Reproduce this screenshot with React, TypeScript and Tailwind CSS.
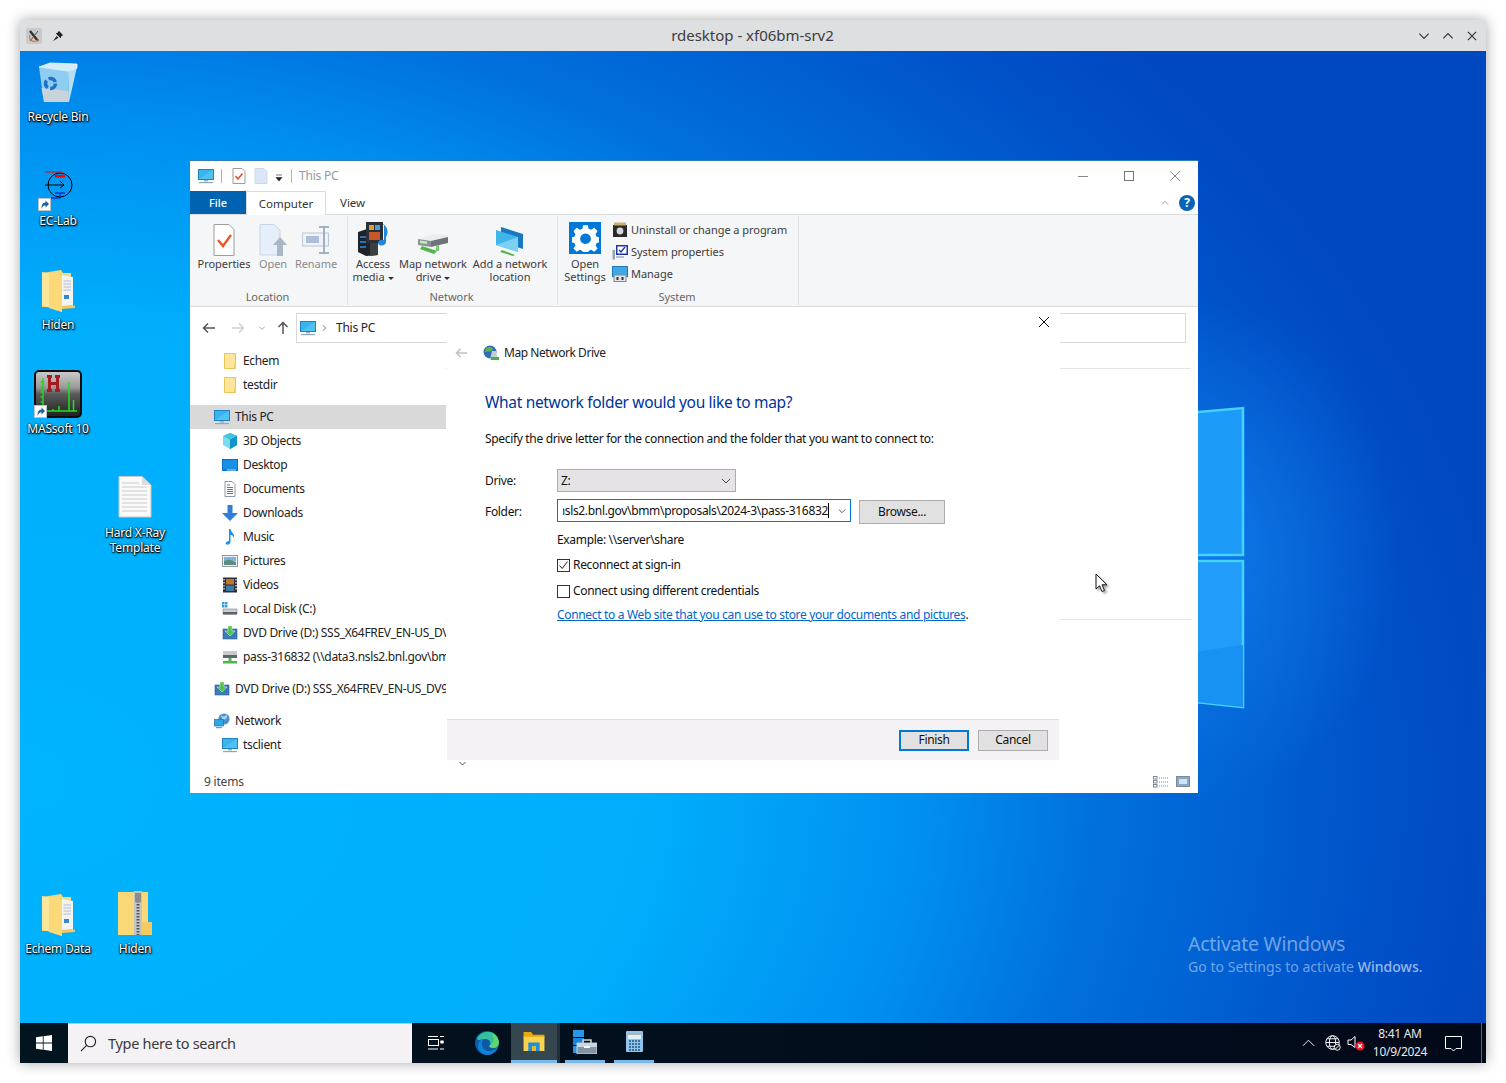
import React from "react";

type P = { className?: string };

const Pc = ({ className = "w-4 h-4" }: P) => (
  <svg viewBox="0 0 16 16" className={className}>
    <rect x="0.5" y="1.5" width="15" height="10" fill="#39b4ee" stroke="#1d83c4" />
    <path d="M1 11 L15 2 V11Z" fill="#61c9f4" opacity="0.6" />
    <rect x="6" y="12" width="4" height="1.5" fill="#9fb2c2" />
    <rect x="1" y="14" width="14" height="1.2" fill="#8fa8bd" />
  </svg>
);
const SmallFolder = () => (
  <svg viewBox="0 0 16 16" className="w-4 h-4">
    <path d="M2.5 0.5 H13.5 V15.5 H2.5Z" fill="#fde69a" stroke="#e9c455" />
    <rect x="12" y="10" width="2" height="5.5" fill="#f5cf63" />
  </svg>
);
const Cube = () => (
  <svg viewBox="0 0 16 16" className="w-4 h-4">
    <path d="M8 0 L15 3 V12 L8 16Z" fill="#1289bd" />
    <path d="M8 0 L1 3 V12 L8 16Z" fill="#7bdcee" />
    <path d="M8 0 L15 3 L8 7 L1 3Z" fill="#43c5e2" />
    <path d="M8 7 V16 L15 12 V3Z" fill="#0f95c8" />
  </svg>
);
const DesktopI = () => (
  <svg viewBox="0 0 16 16" className="w-4 h-4">
    <rect x="0" y="2" width="16" height="12" fill="#0a6fc8" />
    <rect x="1" y="3" width="14" height="9.5" fill="#1a8fe6" />
    <rect x="5" y="12.5" width="9" height="1" fill="#bfe0f6" />
  </svg>
);
const Docs = () => (
  <svg viewBox="0 0 16 16" className="w-4 h-4">
    <path d="M3 0.5 H10 L13 3.5 V15.5 H3Z" fill="#fff" stroke="#8a9aa8" />
    <path d="M5 4 H8 M5 6.5 H11 M5 8.5 H11 M5 10.5 H11 M5 12.5 H11" stroke="#2e86c8" />
  </svg>
);
const Down = () => (
  <svg viewBox="0 0 16 16" className="w-4 h-4">
    <path d="M5.5 0 H10.5 V8 H16 L8 16 L0 8 H5.5Z" fill="#2f7fd6" />
  </svg>
);
const Music = () => (
  <svg viewBox="0 0 16 16" className="w-4 h-4">
    <path d="M7 0 H8.5 C9 4 13 4 12 9 C11 6.5 9.5 6 8.5 6 V13 C8.5 15 6 16 4.5 15.5 C3 15 3.5 12.5 7 12Z" fill="#1e90e8" />
  </svg>
);
const Pics = () => (
  <svg viewBox="0 0 16 16" className="w-4 h-4">
    <rect x="0.5" y="2.5" width="15" height="11" fill="#eef3f6" stroke="#8d9aa4" />
    <rect x="2" y="4" width="12" height="4" fill="#7cb5dc" />
    <path d="M2 8 L7 6.5 L14 9 V12 H2Z" fill="#5f8c7e" />
  </svg>
);
const Vids = () => (
  <svg viewBox="0 0 16 16" className="w-4 h-4">
    <rect x="1" y="0.5" width="14" height="15" fill="#2b2f38" />
    <rect x="4" y="2" width="8" height="5.5" fill="#c0752a" />
    <rect x="4" y="8.5" width="8" height="5.5" fill="#3a79a8" />
    <path d="M2 2 V14 M14 2 V14" stroke="#cfd5da" strokeDasharray="1.5 1.5" strokeWidth="1.4" />
  </svg>
);
const Disk = () => (
  <svg viewBox="0 0 16 16" className="w-4 h-4">
    <rect x="0" y="1" width="2.5" height="2.5" fill="#29a3e8" />
    <rect x="3" y="1" width="2.5" height="2.5" fill="#29a3e8" />
    <rect x="0" y="4" width="2.5" height="2.5" fill="#29a3e8" />
    <rect x="3" y="4" width="2.5" height="2.5" fill="#29a3e8" />
    <path d="M1 8 H15 V13 H1Z" fill="#c9ced2" stroke="#7c858c" strokeWidth="0.6" />
    <rect x="1" y="11" width="14" height="2.5" fill="#59636b" />
  </svg>
);
const Dvd = () => (
  <svg viewBox="0 0 16 16" className="w-4 h-4">
    <rect x="1" y="4" width="14" height="10" fill="#3c7ab8" stroke="#2a5e94" strokeWidth="0.6" />
    <path d="M6 1 H10 V6 H13 L8 11 L3 6 H6Z" fill="#4fc34a" stroke="#e8f7e4" strokeWidth="0.5" />
  </svg>
);
const NetDrive = ({ className = "w-4 h-4" }: P) => (
  <svg viewBox="0 0 16 16" className={className}>
    <path d="M1 2 H15 V8 H1Z" fill="#c7cbce" />
    <rect x="1" y="6" width="14" height="3" fill="#5c666d" />
    <rect x="6.5" y="9" width="3" height="3" fill="#4db848" />
    <rect x="1" y="12" width="14" height="2.5" fill="#4db848" />
  </svg>
);
const NetGlobe = () => (
  <svg viewBox="0 0 16 16" className="w-4 h-4">
    <circle cx="10" cy="6" r="5.6" fill="#4a8fc9" />
    <path d="M7 2 C9 4 11 3 13 2 C14 5 11 8 8 6Z" fill="#9fd3ef" />
    <rect x="0.5" y="6.5" width="9" height="6.5" fill="#2ea6e6" stroke="#1577b8" strokeWidth="0.7" />
    <rect x="2" y="14" width="6" height="1.2" fill="#7f96aa" />
  </svg>
);
const Shortcut = ({ className }: P) => (
  <svg viewBox="0 0 13 13" className={className}>
    <rect x="0.5" y="0.5" width="12" height="12" fill="#fff" stroke="#bcc4cb" />
    <path d="M3.5 11 C3.5 6 5 4.8 7.5 4.5 V2.5 L11 6 L7.5 9.5 V7.3 C5.5 7.3 4.5 8.5 3.5 11Z" fill="#1d5fa8" />
  </svg>
);
const BigFolder = ({ className = "" }: P) => (
  <svg viewBox="0 0 34 44" className={className}>
    <path d="M1 4 L20 1 L22 4 H30 V38 H1Z" fill="#f5d77c" />
    <path d="M21 6 L32 8 V39 L21 37Z" fill="#f1f3f4" />
    <path d="M22.5 12 H30 M22.5 15 H30 M22.5 18 H30 M22.5 21 H30" stroke="#b4bdc5" />
    <path d="M23 26 H28 V30 H23Z" fill="#3b86c7" />
    <path d="M1 3 L21 7 V43 L1 36Z" fill="#fde59b" />
    <path d="M8 5 L21 7 V43 L8 39Z" fill="#fbd878" />
    <path d="M30 36 L34 37 V39 L21 40 V37Z" fill="#f3c95b" />
  </svg>
);

const Row = ({ icon, children, top, sel, gap }: { icon: React.ReactNode; children: React.ReactNode; top?: boolean; sel?: boolean; gap?: boolean }) => (
  <div
    className={`h-6 flex items-center gap-[5px] whitespace-nowrap overflow-hidden ${top ? "pl-6" : "pl-8"} ${sel ? "bg-[#d9d9d9]" : ""} ${gap ? "mt-2" : ""}`}
  >
    <span className="w-4 h-4 shrink-0">{icon}</span>
    <span>{children}</span>
  </div>
);

const RibbonBtn = ({ w, icon, children, dim }: { w: string; icon: React.ReactNode; children: React.ReactNode; dim?: boolean }) => (
  <div className={`${w} flex flex-col items-center shrink-0`}>
    <div className="h-[34px] flex items-end justify-center">{icon}</div>
    <div className={`mt-px text-center leading-[13px] whitespace-nowrap ${dim ? "text-[#8a8a8a]" : "text-[#3c3c3c]"}`}>{children}</div>
  </div>
);
const Caret = () => <span className="inline-block align-middle ml-[3px] w-0 h-0 border-x-[3px] border-x-transparent border-t-[3px] border-t-[#333]" />;

const GroupLabel = ({ children }: { children: React.ReactNode }) => (
  <div className="h-[13px] mb-[2px] pr-[2px] leading-[13px] text-center text-[#666]">{children}</div>
);

const DeskLabel = ({ children }: { children: React.ReactNode }) => (
  <div className="text-white text-center text-[12px] leading-[15px] tracking-[-0.2px] [text-shadow:0_1px_1px_#000,1px_1px_2px_#000,0_0_2px_#000]">{children}</div>
);

const Chev = ({ className = "w-3 h-3", color = "#555" }: P & { color?: string }) => (
  <svg viewBox="0 0 12 12" className={className} fill="none" stroke={color}>
    <path d="M2 4 L6 8 L10 4" />
  </svg>
);

export default function App() {
  return (
    <div className="w-[1506px] h-[1083px] bg-white pt-5 px-5 font-['Noto_Sans',sans-serif] text-[12px] overflow-hidden">
      <div className="w-[1466px] h-[1043px] flex flex-col shadow-[0_0_14px_rgba(0,0,0,0.35)] rounded-t-[2px]">
        {/* Title bar */}
        <div className="h-[31px] shrink-0 bg-[#dedfe1] flex items-center pl-[6px] pr-[7px]">
          <div className="w-[70px] flex items-center">
            <div className="w-4 h-4 bg-[#c8cbcd] rounded-[2px] flex items-center justify-center">
              <svg viewBox="0 0 14 14" className="w-[14px] h-[14px]" fill="none">
                <path d="M3 2 L11 12" stroke="#333" strokeWidth="2.4" />
                <path d="M11 2 L3 12" stroke="#555" strokeWidth="1" />
                <path d="M3 6 C1 11 6 14 11 11" stroke="#e07b30" strokeWidth="1.2" />
              </svg>
            </div>
            <svg viewBox="0 0 14 14" className="w-3 h-3 ml-[10px]">
              <path d="M8 1 L13 6 L11 7 L10 9.5 L4.5 4 L7 3Z M5.5 7 L1 13 L7.5 9Z" fill="#222" />
            </svg>
          </div>
          <div className="flex-1 text-center text-[15px] text-[#3c3c3c] tracking-[-0.02px]">rdesktop - xf06bm-srv2</div>
          <div className="w-[70px] flex items-center justify-end gap-[10px]">
            <Chev className="w-[14px] h-[14px]" color="#333" />
            <svg viewBox="0 0 12 12" className="w-[14px] h-[14px]" fill="none" stroke="#333"><path d="M2 8 L6 4 L10 8" /></svg>
            <svg viewBox="0 0 12 12" className="w-[14px] h-[14px]" fill="none" stroke="#333"><path d="M2.5 2.5 L9.5 9.5 M9.5 2.5 L2.5 9.5" /></svg>
          </div>
        </div>

        {/* Desktop */}
        <div className="relative flex-1 overflow-hidden bg-[radial-gradient(ellipse_1500px_1100px_at_0%_75%,#00b4ff_0%,#00aefc_42%,#0090f0_60%,#0070dc_72%,#0050c8_92%,#0048c0_100%)]">
          {/* wallpaper logo */}
          <div className="absolute left-[980px] top-[250px] w-[400px] h-[500px] bg-[radial-gradient(closest-side,rgba(20,130,240,0.75),rgba(20,110,230,0))]" />
          <svg viewBox="0 0 120 320" className="absolute left-[1110px] top-[352px] w-[120px] h-[320px]">
            <path d="M0 15 L113 5 V152 H0Z" fill="#1c9bf8" stroke="#46d2ff" strokeWidth="2.5" />
            <path d="M0 158 H113 V304 L0 292Z" fill="#219cf9" stroke="#46d2ff" strokeWidth="2.5" />
            <path d="M0 258 L113 242 V304 L0 292Z" fill="#1791f2" />
          </svg>

          {/* Desktop icons */}
          <div className="absolute left-[-2px] top-[9px] w-[80px] flex flex-col items-center">
            <svg viewBox="0 0 40 44" className="w-10 h-11">
              <path d="M1 7 L12 3 L39 4 L39 8 L30 11Z" fill="#d5ecf8" />
              <path d="M1 7 L30 11 L31 42 L6 42Z" fill="#8fcdf0" />
              <path d="M30 11 L39 7 L31 42Z" fill="#b4dff5" />
              <path d="M3.5 28 L30.5 31 L31 42 L6 42Z" fill="#c9d3da" />
              <path d="M1 7 L12 3 L39 4 L39 8 L30 11Z" fill="none" stroke="#e9f6fc" strokeWidth="0.8" />
              <circle cx="12.5" cy="23.5" r="5" fill="none" stroke="#1f72c4" strokeWidth="3.6" strokeDasharray="8 2.5" />
            </svg>
            <div className="mt-[5px]"><DeskLabel>Recycle Bin</DeskLabel></div>
          </div>
          <div className="absolute left-[-2px] top-[118px] w-[80px] flex flex-col items-center">
            <div className="relative w-[44px] h-[42px]">
              <svg viewBox="0 0 44 42" className="w-[44px] h-[42px]" fill="none">
                <circle cx="24" cy="16" r="12" stroke="#000" strokeWidth="1" />
                <path d="M9 3 H26 V6" stroke="#f00" />
                <rect x="19" y="6" width="10" height="2.5" fill="#f00" />
                <path d="M9 16 H28 M24 12 L28 16 L24 19" stroke="#000" />
                <path d="M19 24 H29 M24 24 V29 H15" stroke="#00c" />
              </svg>
              <Shortcut className="absolute left-[2px] bottom-0 w-[13px] h-[13px]" />
            </div>
            <div className="mt-[2px]"><DeskLabel>EC-Lab</DeskLabel></div>
          </div>
          <div className="absolute left-[-2px] top-[218px] w-[80px] flex flex-col items-center">
            <BigFolder className="w-[34px] h-[44px]" />
            <div className="mt-[4px]"><DeskLabel>Hiden</DeskLabel></div>
          </div>
          <div className="absolute left-[-2px] top-[319px] w-[80px] flex flex-col items-center">
            <div className="relative w-[48px] h-[48px]">
              <svg viewBox="0 0 48 48" className="w-12 h-12">
                <defs>
                  <linearGradient id="mas" x1="0" y1="0" x2="0" y2="1">
                    <stop offset="0" stopColor="#c9c9c9" />
                    <stop offset="0.35" stopColor="#9a9a9a" />
                    <stop offset="0.5" stopColor="#5a5a5a" />
                    <stop offset="1" stopColor="#222" />
                  </linearGradient>
                </defs>
                <rect x="0" y="0" width="48" height="48" rx="5" fill="#0d0d0d" />
                <rect x="2" y="2" width="44" height="44" rx="3" fill="url(#mas)" />
                <path d="M13 5 H18 V8 H17 V12 H22 V8 H21 V5 H26 V8 H25 V19 H26 V22 H21 V19 H22 V15 H17 V19 H18 V22 H13 V19 H14 V8 H13Z" fill="#a51b20" />
                <path d="M9 41 H43 M35 41 V12 M39.5 41 V30 M25 41 V36 M19 41 V39" stroke="#22e022" strokeWidth="1.5" />
                <path d="M9 42 V8 M6.5 12 H9 M6.5 17 H9 M6.5 22 H9 M6.5 27 H9 M6.5 32 H9" stroke="#28d028" strokeWidth="1.5" />
              </svg>
              <Shortcut className="absolute left-0 bottom-0 w-[13px] h-[13px]" />
            </div>
            <div className="mt-[3px]"><DeskLabel>MASsoft 10</DeskLabel></div>
          </div>
          <div className="absolute left-[75px] top-[425px] w-[80px] flex flex-col items-center">
            <svg viewBox="0 0 34 42" className="w-[34px] h-[42px]">
              <path d="M1 0.5 H24 L33 9 V41 H1Z" fill="#fafafa" stroke="#c6c6c6" />
              <path d="M24 0.5 V9 H33Z" fill="#dcdcdc" />
              <path d="M4 7 H21 M4 11 H29 M4 15 H29 M4 19 H29 M4 23 H29 M4 27 H29 M4 31 H29 M4 35 H29" stroke="#c9c9c9" />
            </svg>
            <div className="mt-[7px]"><DeskLabel>Hard X-Ray<br />Template</DeskLabel></div>
          </div>
          <div className="absolute left-[-2px] top-[842px] w-[80px] flex flex-col items-center">
            <BigFolder className="w-[34px] h-[44px]" />
            <div className="mt-[4px]"><DeskLabel>Echem Data</DeskLabel></div>
          </div>
          <div className="absolute left-[75px] top-[840px] w-[80px] flex flex-col items-center">
            <svg viewBox="0 0 34 44" className="w-[34px] h-[44px]">
              <path d="M0 1 H30 V31 L34 39 V44 H0Z" fill="#f9d878" />
              <path d="M22 31 H34 V44 H22Z" fill="#f4c95e" />
              <rect x="16" y="0" width="8" height="44" fill="#c5c5c5" />
              <path d="M20 10 V44" stroke="#555" strokeWidth="3" strokeDasharray="1.5 1.5" />
              <rect x="17" y="2" width="6" height="9" fill="#8c8c8c" />
            </svg>
            <div className="mt-[6px]"><DeskLabel>Hiden</DeskLabel></div>
          </div>

          {/* Activate watermark */}
          <div className="absolute left-[1168px] top-[880px] text-white/45">
            <div className="text-[19.5px] leading-[26px] tracking-[-0.25px]">Activate Windows</div>
            <div className="text-[14px] leading-[20px] tracking-[0.05px]">Go to Settings to activate <span className="text-white/60 font-medium">Windows.</span></div>
          </div>

          {/* Cursor */}
          <svg viewBox="0 0 14 20" className="absolute left-[1075px] top-[522px] w-[14px] h-5 z-10 drop-shadow-[2px_2px_1px_rgba(0,0,0,0.35)]">
            <path d="M1 1 V16 L4.5 12.8 L7 18.5 L9.5 17.4 L7 11.8 H12Z" fill="#fff" stroke="#111" strokeWidth="1" />
          </svg>

          {/* Explorer */}
          <div className="absolute left-[170px] top-[109px] w-[1008px] h-[633px] bg-white border-t border-[#2a7fb4] flex flex-col text-[#222]">
            <div className="h-[30px] shrink-0 flex items-center pl-2 text-[#999]">
              <Pc />
              <div className="w-px h-[14px] bg-[#b5b5b5] ml-[7px]" />
              <svg viewBox="0 0 14 16" className="w-[14px] h-4 ml-[10px]">
                <path d="M1 0.5 H10 L13 3.5 V15.5 H1Z" fill="#fff" stroke="#9a9a9a" />
                <path d="M3.5 8 L6 11 L10.5 5.5" fill="none" stroke="#e0542a" strokeWidth="1.6" />
              </svg>
              <svg viewBox="0 0 14 16" className="w-[14px] h-4 ml-2">
                <path d="M1 0.5 H10 L13 3.5 V15.5 H1Z" fill="#dbe6f6" stroke="#ccd9ec" />
              </svg>
              <svg viewBox="0 0 8 8" className="w-2 h-2 ml-[7px] mt-[3px]"><path d="M1 1 H7 M1 3.5 H7 L4 7Z" fill="#222" stroke="#222" strokeWidth="0.6" /></svg>
              <div className="w-px h-[14px] bg-[#b5b5b5] ml-2" />
              <div className="ml-[7px] tracking-[-0.2px]">This PC</div>
              <div className="flex-1" />
              <div className="w-[46px] flex justify-center"><svg viewBox="0 0 12 12" className="w-3 h-3" stroke="#888"><path d="M1 6.5 H11" /></svg></div>
              <div className="w-[46px] flex justify-center"><svg viewBox="0 0 12 12" className="w-3 h-3" fill="none" stroke="#777"><rect x="1.5" y="1.5" width="9" height="9" /></svg></div>
              <div className="w-[46px] flex justify-center"><svg viewBox="0 0 12 12" className="w-3 h-3" stroke="#888"><path d="M1 1 L11 11 M11 1 L1 11" /></svg></div>
            </div>
            <div className="h-6 shrink-0 flex items-stretch border-b border-[#dadbdc]">
              <div className="w-[56px] bg-[#0063b1] text-white flex items-center justify-center font-medium text-[11px] pt-px">File</div>
              <div className="w-[80px] h-6 bg-white border-x border-t border-[#dadbdc] flex items-center justify-center text-[#333] text-[11.5px]">Computer</div>
              <div className="ml-[14px] flex items-center text-[#333] text-[11.5px]">View</div>
              <div className="flex-1" />
              <svg viewBox="0 0 12 12" className="w-[10px] h-[10px] self-center mr-[9px]" fill="none" stroke="#999"><path d="M2 8 L6 4 L10 8" /></svg>
              <div className="w-4 h-4 self-center mr-[3px] rounded-full bg-[#0a64b5] text-white text-[12px] font-bold flex items-center justify-center leading-none">?</div>
            </div>
            {/* Ribbon */}
            <div className="h-[92px] shrink-0 bg-[#f5f6f7] border-b border-[#dadbdc] flex text-[11px] tracking-[-0.05px]">
              <div className="w-[158px] flex flex-col border-r border-[#e2e3e4] my-[1px]">
                <div className="flex flex-1 pl-2 pt-[6px]">
                  <RibbonBtn w="w-[52px]" icon={
                    <svg viewBox="0 0 22 32" className="w-[22px] h-8">
                      <path d="M1 0.5 H16 L21 5.5 V31.5 H1Z" fill="#fff" stroke="#9c9c9c" />
                      <path d="M5 16 L10 22 L18 11" fill="none" stroke="#e8562a" strokeWidth="2.4" />
                    </svg>}>Properties</RibbonBtn>
                  <div className="w-[5px] shrink-0" />
                  <RibbonBtn w="w-[36px]" dim icon={
                    <svg viewBox="0 0 28 32" className="w-7 h-8">
                      <path d="M1 0.5 H15 L21 6 V31 H1Z" fill="#e6eefa" stroke="#c7d5ea" />
                      <path d="M21 13 L28 21 H24 V32 H18 V21 H14Z" fill="#a9b7c6" />
                    </svg>}>Open</RibbonBtn>
                  <RibbonBtn w="w-[50px]" dim icon={
                    <svg viewBox="0 0 28 28" className="w-7 h-7 mb-[2px]">
                      <rect x="0.5" y="7" width="26" height="13" fill="#eef3f9" stroke="#b9c7d6" />
                      <rect x="4" y="10" width="13" height="7" fill="#a9c0d8" />
                      <path d="M17 1 H27 M22 1 V27 M17 27 H27" stroke="#9fb0c0" strokeWidth="2" />
                    </svg>}>Rename</RibbonBtn>
                </div>
                <GroupLabel>Location</GroupLabel>
              </div>
              <div className="w-[210px] flex flex-col border-r border-[#e2e3e4] my-[1px]">
                <div className="flex flex-1 pt-[6px]">
                  <RibbonBtn w="w-[50px]" icon={
                    <svg viewBox="0 0 34 34" className="w-[34px] h-[34px]">
                      <path d="M2 10 L14 6 L22 10 V33 L10 34 L2 30Z" fill="#1f2328" />
                      <path d="M14 6 L22 10 V33 L14 34Z" fill="#3a3f46" />
                      <path d="M4 15 H10 M4 20 H10 M4 25 H10" stroke="#2f8fe0" strokeWidth="1.5" />
                      <rect x="10" y="0" width="17" height="21" fill="#2a3038" />
                      <rect x="13" y="3" width="5" height="5" fill="#d9a02a" />
                      <rect x="19" y="3" width="5" height="5" fill="#4f9fd0" />
                      <rect x="13" y="10" width="11" height="8" fill="#c9572c" />
                      <path d="M27 2 C33 6 32 12 30 15 V20 C30 24 23 25 22 21 C22 18 26 17 28 18 V2Z" fill="#1e88dc" />
                    </svg>}>Access<br />media<Caret /></RibbonBtn>
                  <RibbonBtn w="w-[70px]" icon={
                    <svg viewBox="0 0 32 22" className="w-8 h-[22px] mb-[2px]">
                      <path d="M1 7 L16 2 L31 3 L31 8 L14 12 L1 10Z" fill="#eceeee" />
                      <path d="M1 7 L14 9 V15 L1 13Z" fill="#8c9398" />
                      <path d="M3 8.5 L10 9.5 V12 L3 11Z" fill="#c5e8b8" />
                      <path d="M14 9 L31 5 V11 L14 15Z" fill="#6c747a" />
                      <path d="M5 14 L20 19 L17 22 L3 17Z" fill="#55b44a" />
                      <rect x="19" y="13" width="3" height="6" fill="#7cc96f" />
                    </svg>}>Map network<br />drive<Caret /></RibbonBtn>
                  <RibbonBtn w="w-[84px]" icon={
                    <svg viewBox="0 0 30 30" className="w-[30px] h-[30px]">
                      <path d="M6 1 L28 8 V23 L6 16Z" fill="#1a78c0" />
                      <path d="M1 4 L23 11 V26 L1 19Z" fill="#41b4ea" />
                      <path d="M1 19 L23 11 V26Z" fill="#7bd1f3" />
                      <path d="M7 24 L20 29 L18 30 L5 26Z" fill="#55b44a" />
                    </svg>}>Add a network<br />location</RibbonBtn>
                </div>
                <GroupLabel>Network</GroupLabel>
              </div>
              <div className="w-[241px] flex flex-col border-r border-[#e2e3e4] my-[1px]">
                <div className="flex flex-1 pt-[6px] pl-[5px]">
                  <RibbonBtn w="w-[44px]" icon={
                    <div className="w-8 h-8 mb-[2px] bg-[#0078d7] flex items-center justify-center">
                      <svg viewBox="0 0 24 24" className="w-[27px] h-[27px]">
                        <path fill="#fff" fillRule="evenodd" d="M10 1 h4 l.6 3 2.2.9 2.6-1.7 2.8 2.8-1.7 2.6.9 2.2 3 .6v4l-3 .6-.9 2.2 1.7 2.6-2.8 2.8-2.6-1.7-2.2.9-.6 3h-4l-.6-3-2.2-.9-2.6 1.7-2.8-2.8 1.7-2.6-.9-2.2-3-.6v-4l3-.6.9-2.2-1.7-2.6 2.8-2.8 2.6 1.7 2.2-.9z M12 8 a4.5 4.5 0 1 0 .01 0z" transform="translate(-0.6 -0.9) scale(1.05)" />
                      </svg>
                    </div>}>Open<br />Settings</RibbonBtn>
                  <div className="ml-[5px] -mt-[3px] flex flex-col text-[#3c3c3c]">
                    <div className="h-[22px] flex items-center gap-[3px]">
                      <svg viewBox="0 0 16 16" className="w-4 h-4"><rect x="1" y="3" width="14" height="12" fill="#2a2a2a" /><circle cx="8" cy="9" r="3.4" fill="#d7d7d7" /><rect x="2" y="0.5" width="12" height="3" fill="#c9b071" /></svg>
                      <span>Uninstall or change a program</span>
                    </div>
                    <div className="h-[22px] flex items-center gap-[3px]">
                      <svg viewBox="0 0 16 16" className="w-4 h-4"><rect x="4" y="1" width="12" height="10" fill="#2033a8" /><rect x="5.5" y="2.5" width="9" height="7" fill="#fff" /><path d="M7 6 L9 8 L13 3" fill="none" stroke="#2033a8" strokeWidth="1.4" /><rect x="0.5" y="6" width="2.5" height="9.5" fill="#9aa4ab" /><rect x="4" y="12" width="8" height="2" fill="#b8c0c6" /></svg>
                      <span>System properties</span>
                    </div>
                    <div className="h-[22px] flex items-center gap-[3px]">
                      <svg viewBox="0 0 16 16" className="w-4 h-4"><rect x="0.5" y="0.5" width="15" height="10" fill="#3fa9e6" stroke="#2078b8" /><rect x="2" y="9" width="12" height="6.5" fill="#dfe5ea" stroke="#7d8a94" /><rect x="4.5" y="11" width="2" height="3" fill="#333" /><rect x="9.5" y="11" width="2" height="3" fill="#333" /></svg>
                      <span>Manage</span>
                    </div>
                  </div>
                </div>
                <GroupLabel>System</GroupLabel>
              </div>
            </div>
            {/* Body */}
            <div className="relative flex-1 flex flex-col min-h-0">
              <div className="h-[42px] shrink-0 flex items-center pl-3 pr-3">
                <svg viewBox="0 0 14 12" className="w-[14px] h-3" fill="none" stroke="#555" strokeWidth="1.5"><path d="M13 6 H2 M6 1.5 L1.5 6 L6 10.5" /></svg>
                <svg viewBox="0 0 14 12" className="w-[14px] h-3 ml-[15px]" fill="none" stroke="#d0d0d0" strokeWidth="1.5"><path d="M1 6 H12 M8 1.5 L12.5 6 L8 10.5" /></svg>
                <Chev className="w-2 h-2 ml-[13px]" color="#777" />
                <svg viewBox="0 0 12 14" className="w-3 h-[14px] ml-[11px]" fill="none" stroke="#555" strokeWidth="1.5"><path d="M6 13 V2 M1.5 6 L6 1.5 L10.5 6" /></svg>
                <div className="ml-[7px] flex-1 h-[30px] border border-[#d9d9d9] flex items-center pl-[3px]">
                  <Pc />
                  <svg viewBox="0 0 6 8" className="w-[5px] h-2 ml-[6px]" fill="none" stroke="#666"><path d="M1 1 L4.5 4 L1 7" /></svg>
                  <span className="ml-[9px] text-[#222] tracking-[-0.25px]">This PC</span>
                </div>
              </div>
              <div className="flex-1 flex min-h-0">
                <div className="w-[256px] shrink-0 overflow-hidden tracking-[-0.33px]">
                  <Row icon={<SmallFolder />}>Echem</Row>
                  <Row icon={<SmallFolder />}>testdir</Row>
                  <Row top sel gap icon={<Pc />}>This PC</Row>
                  <Row icon={<Cube />}>3D Objects</Row>
                  <Row icon={<DesktopI />}>Desktop</Row>
                  <Row icon={<Docs />}>Documents</Row>
                  <Row icon={<Down />}>Downloads</Row>
                  <Row icon={<Music />}>Music</Row>
                  <Row icon={<Pics />}>Pictures</Row>
                  <Row icon={<Vids />}>Videos</Row>
                  <Row icon={<Disk />}>Local Disk (C:)</Row>
                  <Row icon={<Dvd />}>DVD Drive (D:) SSS_X64FREV_EN-US_DV9</Row>
                  <Row icon={<NetDrive />}>pass-316832 (\\data3.nsls2.bnl.gov\bmm\proposals)</Row>
                  <Row top gap icon={<Dvd />}>DVD Drive (D:) SSS_X64FREV_EN-US_DV9</Row>
                  <Row top gap icon={<NetGlobe />}>Network</Row>
                  <Row icon={<Pc />}>tsclient</Row>
                </div>
                <div className="flex-1 pr-[7px]">
                  <div className="h-5 border-b border-[#e5e5e5]" />
                  <div className="h-[251px] border-b border-[#e5e5e5]" />
                </div>
              </div>
              <div className="h-[22px] shrink-0 flex items-center pl-[14px] pr-2 text-[#444] tracking-[-0.2px]">
                <span>9 items</span>
                <div className="flex-1" />
                <svg viewBox="0 0 16 12" className="w-4 h-3 mr-[7px]" fill="none" stroke="#7f8a94"><rect x="0.5" y="0.5" width="3.5" height="2.5" /><rect x="0.5" y="4.5" width="3.5" height="2.5" /><rect x="0.5" y="8.5" width="3.5" height="2.5" /><path d="M6 2 H15 M6 6 H15 M6 10 H15" strokeDasharray="1 1" /></svg>
                <svg viewBox="0 0 14 12" className="w-[14px] h-3" fill="#86a9c6" stroke="#7f8a94"><rect x="0.5" y="0.5" width="13" height="10" /><rect x="3" y="3" width="8" height="5" fill="#cfe3f2" stroke="none" /></svg>
              </div>

              {/* Map Network Drive dialog */}
              <div className="absolute left-[257px] top-0 w-[613px] h-[453px] bg-white flex flex-col text-[#111] tracking-[-0.33px]">
                <div className="h-[30px] shrink-0 flex items-center justify-end pr-[10px]">
                  <svg viewBox="0 0 12 12" className="w-3 h-3" stroke="#111"><path d="M1 1 L11 11 M11 1 L1 11" /></svg>
                </div>
                <div className="h-[32px] shrink-0 flex items-center pl-2">
                  <svg viewBox="0 0 14 12" className="w-[13px] h-3" fill="none" stroke="#c0c0c0" strokeWidth="1.5"><path d="M13 6 H2 M6 1.5 L1.5 6 L6 10.5" /></svg>
                  <svg viewBox="0 0 16 16" className="w-4 h-4 ml-[15px]">
                    <circle cx="7" cy="7" r="6.5" fill="#2d6fb0" />
                    <path d="M3 3 C6 1 9 2 10 4 C8 8 5 6 2 7Z" fill="#5cb356" />
                    <path d="M9 6 L13 6 L15 15 L7 15Z" fill="#c5cdd2" />
                    <rect x="8" y="12" width="8" height="3" fill="#47b04a" />
                  </svg>
                  <span className="ml-[5px] text-[#222] tracking-[-0.45px]">Map Network Drive</span>
                </div>
                <div className="pl-[38px] pr-2 flex flex-col">
                  <div className="mt-[22px] h-6 flex items-center text-[15.5px] text-[#003399]">What network folder would you like to map?</div>
                  <div className="mt-[15px] h-[18px] flex items-center">Specify the drive letter for the connection and the folder that you want to connect to:</div>
                  <div className="mt-[21px] h-[23px] flex items-center">
                    <span className="w-[72px] mt-[1px]">Drive:</span>
                    <div className="w-[179px] h-[23px] bg-[#e6e3e6] border border-[#adadad] flex items-center justify-between pl-[3px] pr-[3px]">
                      <span>Z:</span>
                      <Chev className="w-3 h-3" color="#444" />
                    </div>
                  </div>
                  <div className="mt-[7px] h-[25px] flex items-start">
                    <span className="w-[72px] leading-[25px]">Folder:</span>
                    <div className="w-[294px] h-[23px] border border-[#0078d7] flex items-center pl-[5px] pr-[3px]">
                      <div className="w-[266px] flex justify-end overflow-hidden whitespace-nowrap border-r border-black h-[15px] items-center">
                        <span className="shrink-0">nsls2.bnl.gov\bmm\proposals\2024-3\pass-316832</span>
                      </div>
                      <Chev className="w-[10px] h-[10px] ml-[8px]" color="#444" />
                    </div>
                    <div className="ml-2 mt-[1px] w-[86px] h-6 bg-[#e1e1e1] border border-[#adadad] flex items-center justify-center">Browse...</div>
                  </div>
                  <div className="ml-[72px] mt-[7px] h-[18px] flex items-center">Example: \\server\share</div>
                  <div className="ml-[72px] mt-[7px] h-[18px] flex items-center gap-[3px]">
                    <div className="w-[13px] h-[13px] border border-[#333] bg-white flex items-center justify-center">
                      <svg viewBox="0 0 11 11" className="w-[11px] h-[11px]" fill="none" stroke="#222"><path d="M1.5 5.5 L4.2 8.5 L9.5 1.5" /></svg>
                    </div>
                    <span>Reconnect at sign-in</span>
                  </div>
                  <div className="ml-[72px] mt-[8px] h-[18px] flex items-center gap-[3px]">
                    <div className="w-[13px] h-[13px] border border-[#333] bg-white" />
                    <span>Connect using different credentials</span>
                  </div>
                  <div className="ml-[72px] mt-[6px] h-[18px] flex items-center">
                    <span className="text-[#0066cc] underline">Connect to a Web site that you can use to store your documents and pictures</span><span>.</span>
                  </div>
                </div>
                <div className="mt-auto mr-px h-[41px] shrink-0 bg-[#f5f2f5] border-t border-[#dfdfdf] flex items-center justify-end pr-[11px] gap-[9px]">
                  <div className="w-[70px] h-[21px] bg-[#e1e1e1] border-2 border-[#0078d7] flex items-center justify-center">Finish</div>
                  <div className="w-[70px] h-[21px] bg-[#e1e1e1] border border-[#adadad] flex items-center justify-center">Cancel</div>
                </div>
              </div>
              <Chev className="absolute left-[268px] top-[452px] w-[9px] h-[9px]" color="#222" />
            </div>
          </div>
        </div>

        {/* Taskbar */}
        <div className="h-10 shrink-0 flex items-stretch bg-[linear-gradient(90deg,#02151f,#020d1c_60%,#020a1a)] text-white">
          <div className="w-12 flex items-center justify-center">
            <svg viewBox="0 0 16 16" className="w-4 h-4" fill="#fff"><path d="M0 2.3 L6.8 1.3 V7.6 H0Z M7.6 1.2 L16 0 V7.6 H7.6Z M0 8.4 H6.8 V14.7 L0 13.7Z M7.6 8.4 H16 V16 L7.6 14.8Z" /></svg>
          </div>
          <div className="w-[344px] bg-[#f5f2f6] border-t border-[#bfc9d0] flex items-center pl-[12px] text-[#3a3a3a] text-[14.5px] tracking-[-0.3px]">
            <svg viewBox="0 0 18 18" className="w-[17px] h-[17px]" fill="none" stroke="#222" strokeWidth="1.2"><circle cx="11" cy="7" r="5.5" /><path d="M7 11 L1 17" /></svg>
            <span className="ml-[11px]">Type here to search</span>
          </div>
          <div className="w-12 flex items-center justify-center">
            <svg viewBox="0 0 16 16" className="w-4 h-4" fill="none" stroke="#fff"><rect x="0.5" y="4.5" width="10" height="6" /><path d="M0 1.5 H10 M0 14 H10 M12 1.5 H16 M12 7 H16 M12 14 H16" /><rect x="13" y="6" width="2" height="2" fill="#fff" /></svg>
          </div>
          <div className="w-[51px] pl-[3px] flex items-center justify-center">
            <svg viewBox="0 0 24 24" className="w-6 h-6">
              <circle cx="12" cy="12" r="12" fill="#0c59a4" />
              <path d="M2 8 C4 2 12 -1 18 2 C23 5 25 11 23 15 C21 18 15 18 14 15 C17 13 15 8 11 8 C7 8 3 10 2 8Z" fill="#35c1a0" />
              <path d="M23 15 C22 21 16 24 12 24 C5 23 1 17 4 11 C5 9 7 8 9 8 C6 10 6 16 10 19 C15 22 21 19 23 15Z" fill="#1481d8" />
              <path d="M14 15 C18 18 22 17 23 14 L24 12 C24 8 21 3 16 1.5 C20 6 20 12 14 15Z" fill="#5fd86b" />
            </svg>
          </div>
          <div className="w-[46px] bg-[#36464e] border-b-[3px] border-[#76b9ed] flex items-center justify-center">
            <svg viewBox="0 0 22 20" className="w-[22px] h-[19px]">
              <path d="M0 0 H8 L10 3 H22 V6 H0Z" fill="#e8a90f" />
              <path d="M0 5 H22 V20 H0Z" fill="#fbd24e" />
              <path d="M5 11 H17 V20 H13 V15 H9 V20 H5Z" fill="#1c8fe0" />
              <rect x="9" y="15" width="4" height="5" fill="#f2b90f" />
            </svg>
          </div>
          <div className="w-[3px] bg-[#22303a]" />
          <div className="w-[5px]" />
          <div className="w-[40px] border-b-[3px] border-[#76b9ed] flex items-center justify-center">
            <svg viewBox="0 0 24 24" className="w-6 h-6">
              <rect x="0" y="0" width="11" height="7" fill="#2a96e8" />
              <rect x="0" y="8" width="11" height="7" fill="#1a84d8" />
              <rect x="0" y="16" width="11" height="7" fill="#2a96e8" />
              <path d="M4 13 H24 V24 H4Z" fill="#8195a5" stroke="#dfe7ec" strokeWidth="0.8" />
              <rect x="4" y="13" width="20" height="4" fill="#cbd6de" />
              <path d="M10 13 V10 H18 V13" fill="none" stroke="#cbd6de" strokeWidth="1.5" />
              <rect x="11" y="16" width="6" height="2" fill="#fff" />
            </svg>
          </div>
          <div className="w-[9px]" />
          <div className="w-[40px] border-b-[3px] border-[#76b9ed] flex items-center justify-center">
            <svg viewBox="0 0 17 21" className="w-[17px] h-[21px]">
              <rect x="0" y="0" width="17" height="21" rx="1" fill="#8ec5ec" />
              <rect x="2" y="2" width="13" height="1.5" fill="#e8a36a" />
              <rect x="2" y="4" width="13" height="4" fill="#dff1fb" />
              <path d="M3 10 H14 M3 13 H14 M3 16 H14 M3 19 H14" stroke="#3d6f96" strokeWidth="2" strokeDasharray="2 1" />
            </svg>
          </div>
          <div className="flex-1" />
          <div className="w-[26px] flex items-center justify-center">
            <svg viewBox="0 0 14 8" className="w-[13px] h-2" fill="none" stroke="#fff"><path d="M1 7 L7 1 L13 7" /></svg>
          </div>
          <div className="w-6 flex items-center justify-center">
            <svg viewBox="0 0 17 17" className="w-4 h-4" fill="none" stroke="#fff"><circle cx="8" cy="8" r="7.2" /><ellipse cx="8" cy="8" rx="3.4" ry="7.2" /><path d="M1 8 H15 M2 4 H14 M2 12 H14" /><circle cx="13" cy="13" r="3.2" fill="#0b1420" /><path d="M11 15 L15 11" /></svg>
          </div>
          <div className="w-[22px] flex items-center justify-center">
            <svg viewBox="0 0 18 16" className="w-[18px] h-4">
              <path d="M1 5 H4 L8 1.5 V12.5 L4 9.5 H1Z" fill="none" stroke="#fff" />
              <circle cx="13" cy="11" r="4.6" fill="#e81123" />
              <path d="M11 9 L15 13 M15 9 L11 13" stroke="#fff" strokeWidth="1.2" />
            </svg>
          </div>
          <div className="w-[66px] flex flex-col items-center justify-center leading-[18px] text-[12px] text-[#e8e8e8] tracking-[-0.3px]">
            <span>8:41 AM</span>
            <span>10/9/2024</span>
          </div>
          <div className="w-10 flex items-center justify-center">
            <svg viewBox="0 0 17 17" className="w-[17px] h-[17px]" fill="none" stroke="#fff"><path d="M0.5 1.5 H16.5 V13.5 H11 L8.5 16 L6 13.5 H0.5Z" /></svg>
          </div>
          <div className="ml-2 mr-1 w-px bg-[#5a6670]" />
        </div>
      </div>
    </div>
  );
}
